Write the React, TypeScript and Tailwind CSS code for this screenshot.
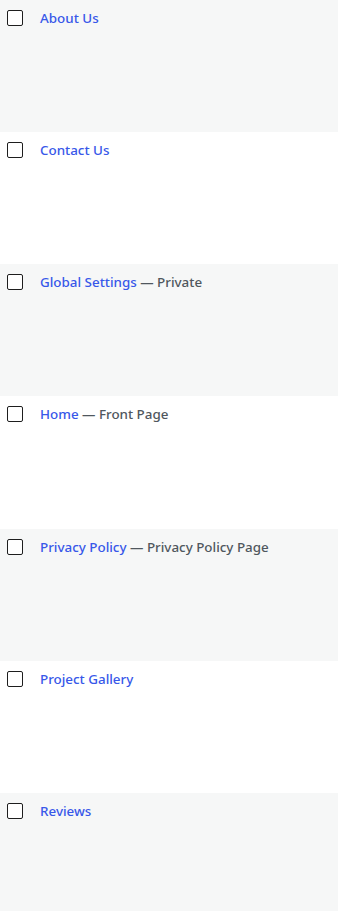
import React from "react";

const rows: { title: string; state?: string }[] = [
  { title: "About Us" },
  { title: "Contact Us" },
  { title: "Global Settings", state: "Private" },
  { title: "Home", state: "Front Page" },
  { title: "Privacy Policy", state: "Privacy Policy Page" },
  { title: "Project Gallery" },
  { title: "Reviews" },
];

export default function App() {
  return (
    <div className="w-[338px] h-[911px] overflow-hidden bg-white" style={{ fontFamily: '"Noto Sans", sans-serif' }}>
      {rows.map((r, i) => (
        <div
          key={r.title}
          className={`flex h-[132.17px] items-start ${i % 2 === 0 ? "bg-[#f6f7f7]" : "bg-white"}`}
        >
          <div className="pl-[7px] pt-[10px] w-[40px] shrink-0">
            <div className="w-4 h-4 border-[1.5px] border-[#1e1e1e] rounded-[2px] bg-white" />
          </div>
          <div className="pt-[9px] text-[13.4px] leading-[18px] font-medium text-[#50575e]">
            <span className="text-[#3858e9]">{r.title}</span>
            {r.state && <span> — {r.state}</span>}
          </div>
        </div>
      ))}
    </div>
  );
}
